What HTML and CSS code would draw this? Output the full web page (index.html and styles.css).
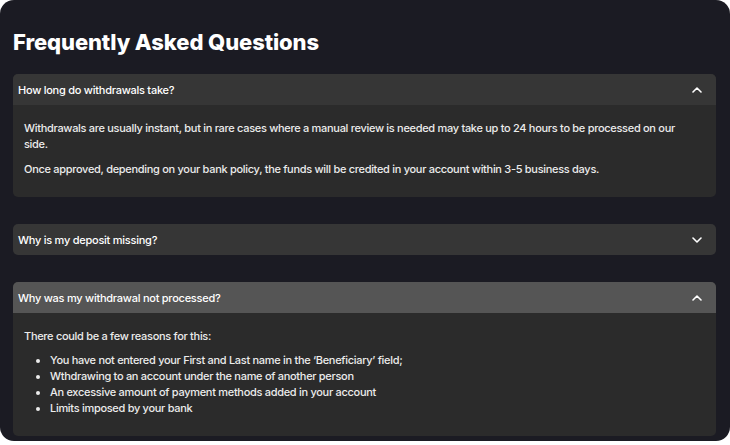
FILE: index.html
```html
<!DOCTYPE html>
<html>
<head>
<meta charset="utf-8">
<link rel="stylesheet" href="styles.css">
</head>
<body>
<div class="panel">
  <h1 class="title">Frequently Asked Questions</h1>
  <div class="faq">
    <div class="item">
      <div class="head">
        <span>How long do withdrawals take?</span>
        <svg class="chev" width="10" height="6" viewBox="0 0 10 6"><path d="M1 5 L5 1 L9 5" fill="none" stroke="#fff" stroke-width="1.6" stroke-linecap="round" stroke-linejoin="round"/></svg>
      </div>
      <div class="body">
        <p>Withdrawals are usually instant, but in rare cases where a manual review is needed may take up to 24 hours to be processed on our side.</p>
        <p>Once approved, depending on your bank policy, the funds will be credited in your account within 3-5 business days.</p>
      </div>
    </div>
    <div class="item">
      <div class="head">
        <span>Why is my deposit missing?</span>
        <svg class="chev" width="10" height="6" viewBox="0 0 10 6"><path d="M1 1 L5 5 L9 1" fill="none" stroke="#fff" stroke-width="1.6" stroke-linecap="round" stroke-linejoin="round"/></svg>
      </div>
    </div>
    <div class="item">
      <div class="head active">
        <span>Why was my withdrawal not processed?</span>
        <svg class="chev" width="10" height="6" viewBox="0 0 10 6"><path d="M1 5 L5 1 L9 5" fill="none" stroke="#fff" stroke-width="1.6" stroke-linecap="round" stroke-linejoin="round"/></svg>
      </div>
      <div class="body">
        <p class="lead">There could be a few reasons for this:</p>
        <ul>
          <li>You have not entered your First and Last name in the ‘Beneficiary’ field;</li>
          <li>Wthdrawing to an account under the name of another person</li>
          <li>An excessive amount of payment methods added in your account</li>
          <li>Limits imposed by your bank</li>
        </ul>
      </div>
    </div>
  </div>
</div>
</body>
</html>
```
FILE: styles.css
```css
html, body {
  margin: 0;
  padding: 0;
  background: #ffffff;
}
body {
  width: 730px;
  height: 445px;
  overflow: hidden;
  font-family: Inter, "Open Sans", sans-serif;
}
.panel {
  box-sizing: border-box;
  width: 730px;
  height: 441px;
  background: #1b1b23;
  border-radius: 14px;
  padding: 30px 14px 0 13px;
}
.title {
  margin: 0 0 20px 0;
  color: #ffffff;
  font-size: 22px;
  line-height: 24px;
  font-weight: 800;
  letter-spacing: -0.1px;
}
.faq {
  display: flex;
  flex-direction: column;
  gap: 27px;
}
.item {
  border-radius: 5px;
  overflow: hidden;
  background: #2b2b2b;
}
.head {
  height: 31px;
  background: #363636;
  display: flex;
  align-items: center;
  justify-content: space-between;
  padding: 0 14px 0 5px;
  color: #ffffff;
  font-size: 11px;
  font-weight: 500;
  letter-spacing: -0.25px;
}
.head.active {
  background: #555555;
}
.chev {
  display: block;
}
.body {
  padding: 15px 24px 20px 11px;
  color: #ececec;
  font-size: 11px;
  line-height: 16px;
  font-weight: 500;
  letter-spacing: -0.3px;
}
.body p {
  margin: 0 0 9px 0;
}
.body p.lead {
  margin-bottom: 8px;
}
.body p:last-child {
  margin-bottom: 0;
}
.body ul {
  margin: 0;
  padding-left: 26px;
}
```
